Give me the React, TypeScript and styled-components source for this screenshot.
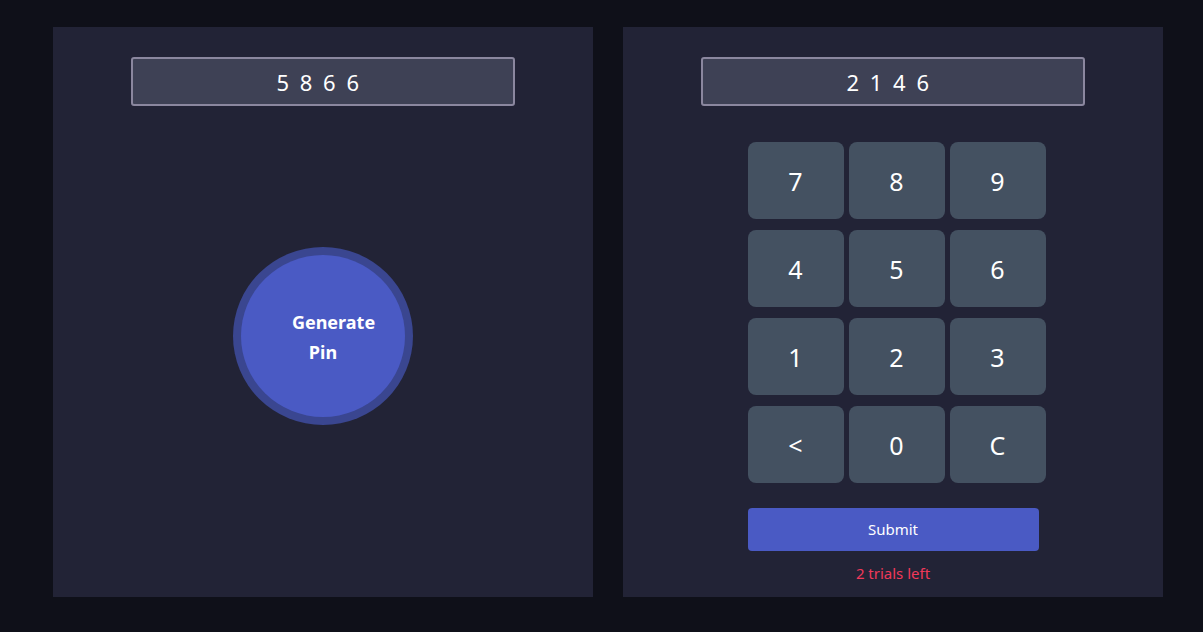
import styled, { createGlobalStyle } from 'styled-components'

const GlobalStyle = createGlobalStyle`
  * {
    box-sizing: border-box;
  }

  body {
    margin: 0;
    background: #0f1019;
    font-family: "Noto Sans", "Open Sans", sans-serif;
    color: #fff;
    overflow: hidden;
  }
`

const Page = styled.div`
  display: flex;
  gap: 30px;
  padding: 27px 53px;
  min-height: 632px;
`

const Panel = styled.section`
  flex: 0 0 540px;
  width: 540px;
  height: 570px;
  background: #222336;
  display: flex;
  flex-direction: column;
  align-items: center;
  padding-top: 30px;
`

const Display = styled.div`
  width: 384px;
  height: 49px;
  background: #3e4155;
  border: 2px solid #8b879f;
  border-radius: 3px;
  display: flex;
  align-items: center;
  justify-content: center;
  font-size: 22px;
  letter-spacing: 2.5px;
  padding-right: 8px;
  color: #fff;
`

const Ring = styled.div`
  margin-top: 141px;
  width: 180px;
  height: 178px;
  border-radius: 50%;
  background: #3a4690;
  display: flex;
  align-items: center;
  justify-content: center;
`

const GenerateButton = styled.button`
  width: 164px;
  height: 162px;
  border-radius: 50%;
  border: none;
  background: #4a5ac4;
  color: #fff;
  font-family: inherit;
  font-weight: 700;
  font-size: 18px;
  line-height: 30px;
  text-align: center;
  padding: 2px 0 0;
  cursor: pointer;
`

const Line = styled.span<{ $shift?: number }>`
  display: block;
  padding-left: ${p => p.$shift ?? 0}px;
`

const KeyArea = styled.div`
  width: 291px;
  margin-top: 36px;
`

const Keypad = styled.div`
  width: 298px;
  display: grid;
  grid-template-columns: repeat(3, 96px);
  grid-auto-rows: 77px;
  column-gap: 5px;
  row-gap: 11px;
`

const Key = styled.button`
  border: none;
  border-radius: 8px;
  background: #445161;
  color: #fff;
  font-family: inherit;
  font-size: 25px;
  cursor: pointer;
`

const SubmitButton = styled.button`
  width: 291px;
  height: 43px;
  margin-top: 25px;
  border: none;
  border-radius: 4px;
  background: #4a5ac4;
  color: #fff;
  font-family: inherit;
  font-size: 15px;
  padding-bottom: 2px;
  cursor: pointer;
`

const Trials = styled.p`
  margin: 12px 0 0;
  text-align: center;
  font-size: 15px;
  color: #f0395a;
`

const keys = ['7', '8', '9', '4', '5', '6', '1', '2', '3', '<', '0', 'C']

export default function App() {
  return (
    <>
      <GlobalStyle />
      <Page>
        <Panel>
          <Display>5 8 6 6</Display>
          <Ring>
            <GenerateButton>
              <Line $shift={21}>Generate</Line>
              <Line>Pin</Line>
            </GenerateButton>
          </Ring>
        </Panel>

        <Panel>
          <Display>2 1 4 6</Display>
          <KeyArea>
            <Keypad>
              {keys.map(k => (
                <Key key={k}>{k}</Key>
              ))}
            </Keypad>
            <SubmitButton>Submit</SubmitButton>
            <Trials>2 trials left</Trials>
          </KeyArea>
        </Panel>
      </Page>
    </>
  )
}
